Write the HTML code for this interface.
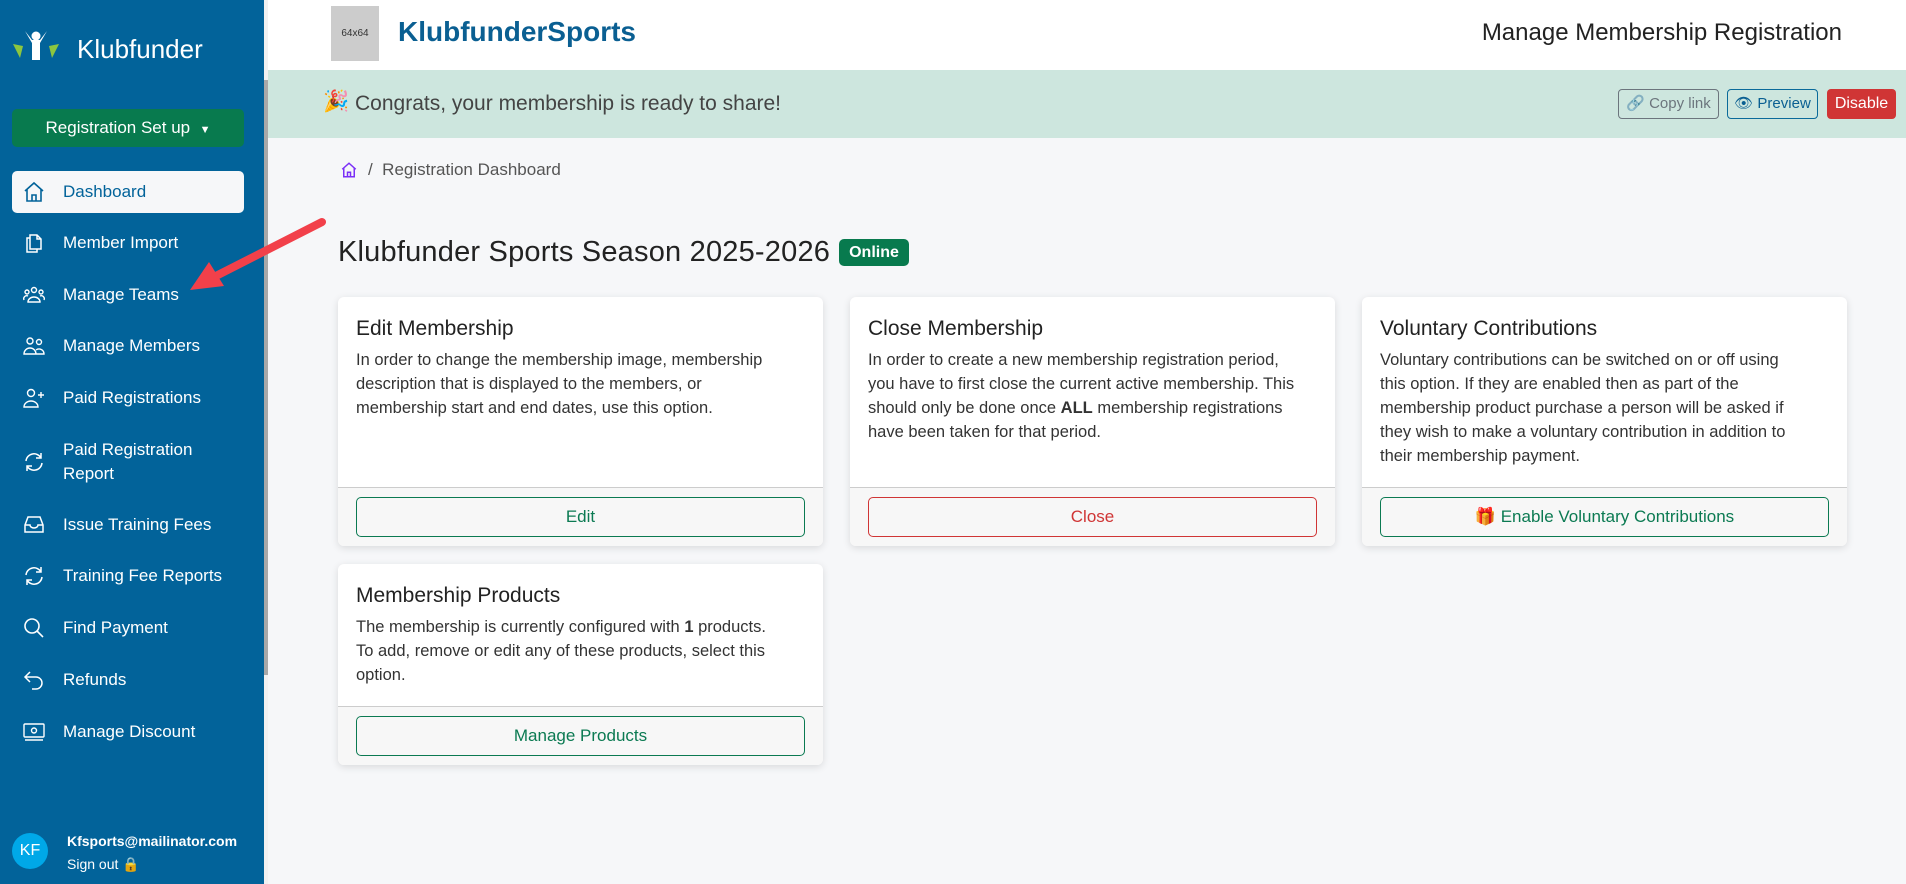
<!DOCTYPE html>
<html><head><meta charset="utf-8"><style>
*{box-sizing:border-box;margin:0;padding:0}
body{width:1906px;height:884px;overflow:hidden;font-family:"Liberation Sans",sans-serif;background:#f6f7f9;position:relative;color:#212529}
.sb{position:absolute;left:0;top:0;width:264px;height:884px;background:#02639a;color:#fff}
.scr{position:absolute;left:264px;top:0;width:4px;height:884px;background:#f1f1f1}
.scr i{position:absolute;left:0;top:80px;width:4px;height:595px;background:#a8a8a8}
.logo{position:absolute;left:77px;top:34px;font-size:26px;color:#fff}
.reg{position:absolute;left:12px;top:109px;width:232px;height:38px;background:#087a4e;border-radius:5px;color:#fff;font-size:17px;text-align:center;line-height:38px}
.act{position:absolute;left:12px;top:171px;width:232px;height:42px;background:#f6f7f9;border-radius:5px}
.mi{position:absolute;left:63px;font-size:17px;color:#fff;line-height:24px}
.ic{position:absolute;left:22px;width:24px;height:24px}
.main{position:absolute;left:268px;top:0;right:0;bottom:0}
.hdr{position:absolute;left:0;top:0;right:0;height:70px;background:#fff}
.ph{position:absolute;left:63px;top:6px;width:48px;height:55px;background:#ccc;font-size:10px;color:#333;text-align:center;line-height:55px}
.brand{position:absolute;left:130px;top:16px;font-size:28px;font-weight:bold;color:#0a5f92}
.ttl{position:absolute;right:64px;top:19px;font-size:24px;color:#222}
.ban{position:absolute;left:0;top:70px;right:0;height:68px;background:#cde6de}
.ban span{position:absolute;left:87px;top:22px;font-size:21px;color:#444}
.btn{position:absolute;top:89px;height:30px;border-radius:4px;font-size:15px;line-height:28px;text-align:center}
.card{position:absolute;background:#fff;border-radius:6px;box-shadow:0 2px 8px rgba(0,0,0,.12);overflow:hidden}
.card h3{position:absolute;left:18px;top:20px;font-size:21px;font-weight:normal;color:#222}
.card p{position:absolute;left:18px;top:51px;font-size:16.5px;line-height:24px;color:#333}
.ft{position:absolute;left:0;right:0;bottom:0;background:#f7f7f7;border-top:1px solid #ccc}
.ob{position:absolute;left:18px;right:18px;top:9px;height:40px;border:1px solid #0b7a52;border-radius:5px;text-align:center;line-height:38px;font-size:17px;color:#0b7a52}
</style></head><body>
<div class="sb">
 <svg style="position:absolute;left:12px;top:30px" width="48" height="32" viewBox="0 0 48 32"><path d="M1 14 L8 28 L11 16 Z M37 16 L40 28 L47 14Z" fill="#8cc63f"/><circle cx="24" cy="6" r="4.5" fill="#fff"/><path d="M13 1 L20 13 L20 30 L28 30 L28 13 L35 1 L28 10 L20 10 Z" fill="#fff"/></svg>
 <div class="logo">Klubfunder</div>
 <div class="reg">Registration Set up &nbsp;<span style="font-size:11px">▼</span></div>
 <div class="act"></div>
 <svg class="ic" style="top:180px" viewBox="0 0 24 24" fill="none" stroke="#02639a" stroke-width="1.6"><path d="M3 11 L12 3 L21 11 M5 9 V21 H19 V9 M10 21 V15 H14 V21"/></svg>
 <div class="mi" style="top:180px;color:#02639a">Dashboard</div>
 <svg class="ic" style="top:231px" viewBox="0 0 24 24" fill="none" stroke="#fff" stroke-width="1.5"><path d="M8 4 H15 L19 8 V18 H8 Z M15 4 V8 H19 M8 7 H5 V21 H15 V18"/></svg>
 <div class="mi" style="top:231px">Member Import</div>
 <svg class="ic" style="top:283px" viewBox="0 0 24 24" fill="none" stroke="#fff" stroke-width="1.4"><circle cx="12" cy="7" r="2.5"/><circle cx="5" cy="9" r="2"/><circle cx="19" cy="9" r="2"/><path d="M6 19 a6 5 0 0 1 12 0 Z M2 17 a3 3 0 0 1 4-4 M22 17 a3 3 0 0 0 -4-4"/></svg>
 <div class="mi" style="top:283px">Manage Teams</div>
 <svg class="ic" style="top:334px" viewBox="0 0 24 24" fill="none" stroke="#fff" stroke-width="1.4"><circle cx="8" cy="7" r="3"/><circle cx="17" cy="8" r="2.5"/><path d="M2 20 a6 6 0 0 1 12 0 Z M14 20 H22 a5 5 0 0 0 -8 -4"/></svg>
 <div class="mi" style="top:334px">Manage Members</div>
 <svg class="ic" style="top:386px" viewBox="0 0 24 24" fill="none" stroke="#fff" stroke-width="1.4"><circle cx="9" cy="7" r="3.5"/><path d="M2 21 a7 6 0 0 1 14 0 Z M19 6 V12 M16 9 H22"/></svg>
 <div class="mi" style="top:386px">Paid Registrations</div>
 <svg class="ic" style="top:450px" viewBox="0 0 24 24" fill="none" stroke="#fff" stroke-width="1.5"><path d="M4 11 a8 8 0 0 1 15-3 M19 3 V8 H14 M20 13 a8 8 0 0 1 -15 3 M5 21 V16 H10"/></svg>
 <div class="mi" style="top:438px">Paid Registration<br>Report</div>
 <svg class="ic" style="top:513px" viewBox="0 0 24 24" fill="none" stroke="#fff" stroke-width="1.5"><path d="M3 12 L6 4 H18 L21 12 V19 H3 Z M3 12 H8 a4 3 0 0 0 8 0 H21"/></svg>
 <div class="mi" style="top:513px">Issue Training Fees</div>
 <svg class="ic" style="top:564px" viewBox="0 0 24 24" fill="none" stroke="#fff" stroke-width="1.5"><path d="M4 11 a8 8 0 0 1 15-3 M19 3 V8 H14 M20 13 a8 8 0 0 1 -15 3 M5 21 V16 H10"/></svg>
 <div class="mi" style="top:564px">Training Fee Reports</div>
 <svg class="ic" style="top:616px" viewBox="0 0 24 24" fill="none" stroke="#fff" stroke-width="1.6"><circle cx="10" cy="10" r="7"/><path d="M15 15 L21 21"/></svg>
 <div class="mi" style="top:616px">Find Payment</div>
 <svg class="ic" style="top:668px" viewBox="0 0 24 24" fill="none" stroke="#fff" stroke-width="1.5"><path d="M8 4 L3 9 L8 14 M3 9 H14 a6 6 0 0 1 0 12 H10"/></svg>
 <div class="mi" style="top:668px">Refunds</div>
 <svg class="ic" style="top:720px" viewBox="0 0 24 24" fill="none" stroke="#fff" stroke-width="1.4"><rect x="2" y="4" width="20" height="13" rx="1"/><circle cx="12" cy="10.5" r="2.5"/><path d="M3 20 H21"/></svg>
 <div class="mi" style="top:720px">Manage Discount</div>
 <div style="position:absolute;left:12px;top:833px;width:36px;height:36px;border-radius:50%;background:#00a8e8;color:#fff;font-size:16px;text-align:center;line-height:36px">KF</div>
 <div style="position:absolute;left:67px;top:833px;font-size:14px;font-weight:bold;color:#fff">Kfsports@mailinator.com</div>
 <div style="position:absolute;left:67px;top:856px;font-size:14px;color:#fff">Sign out 🔒</div>
</div>
<div class="scr"><i></i></div>
<div class="main">
 <div class="hdr"><div class="ph">64x64</div><div class="brand">KlubfunderSports</div><div class="ttl">Manage Membership Registration</div></div>
 <div class="ban"><span style="left:55px;top:20px">🎉</span><span>Congrats, your membership is ready to share!</span></div>
 <div class="btn" style="left:1350px;width:101px;border:1px solid #6c757d;color:#6c757d">🔗 Copy link</div>
 <div class="btn" style="left:1459px;width:91px;border:1px solid #0a6a9a;color:#0a5f92">👁 Preview</div>
 <div class="btn" style="left:1559px;width:69px;background:#d03535;color:#fff;line-height:30px;font-size:16px">Disable</div>
 <svg style="position:absolute;left:72px;top:161px" width="18" height="18" viewBox="0 0 24 24" fill="none" stroke="#7b2ff7" stroke-width="2"><path d="M3 11 L12 3 L21 11 M5 9 V21 H19 V9 M10 21 V15 H14 V21"/></svg>
 <div style="position:absolute;left:100px;top:160px;font-size:17px;color:#555">/ &nbsp;Registration Dashboard</div>
 <div style="position:absolute;left:70px;top:236px;font-size:29px;color:#222;letter-spacing:0.2px">Klubfunder Sports Season 2025-2026</div>
 <div style="position:absolute;left:571px;top:239px;width:70px;height:27px;background:#087a4e;border-radius:5px;color:#fff;font-weight:bold;font-size:16px;text-align:center;line-height:27px">Online</div>

 <div class="card" style="left:70px;top:297px;width:485px;height:249px"><h3>Edit Membership</h3><p>In order to change the membership image, membership<br>description that is displayed to the members, or<br>membership start and end dates, use this option.</p><div class="ft" style="height:59px"><div class="ob">Edit</div></div></div>
 <div class="card" style="left:582px;top:297px;width:485px;height:249px"><h3>Close Membership</h3><p>In order to create a new membership registration period,<br>you have to first close the current active membership. This<br>should only be done once <b>ALL</b> membership registrations<br>have been taken for that period.</p><div class="ft" style="height:59px"><div class="ob" style="border-color:#d03535;color:#d03535">Close</div></div></div>
 <div class="card" style="left:1094px;top:297px;width:485px;height:249px"><h3>Voluntary Contributions</h3><p>Voluntary contributions can be switched on or off using<br>this option. If they are enabled then as part of the<br>membership product purchase a person will be asked if<br>they wish to make a voluntary contribution in addition to<br>their membership payment.</p><div class="ft" style="height:59px"><div class="ob">🎁 Enable Voluntary Contributions</div></div></div>
 <div class="card" style="left:70px;top:564px;width:485px;height:201px"><h3>Membership Products</h3><p>The membership is currently configured with <b>1</b> products.<br>To add, remove or edit any of these products, select this<br>option.</p><div class="ft" style="height:59px"><div class="ob">Manage Products</div></div></div>
</div>
<svg style="position:absolute;left:0;top:0" width="400" height="320"><line x1="322" y1="222" x2="210" y2="279" stroke="#f2404a" stroke-width="8" stroke-linecap="round"/><path d="M190 290 L209 262 L224 286 Z" fill="#f2404a"/></svg>
</body></html>
